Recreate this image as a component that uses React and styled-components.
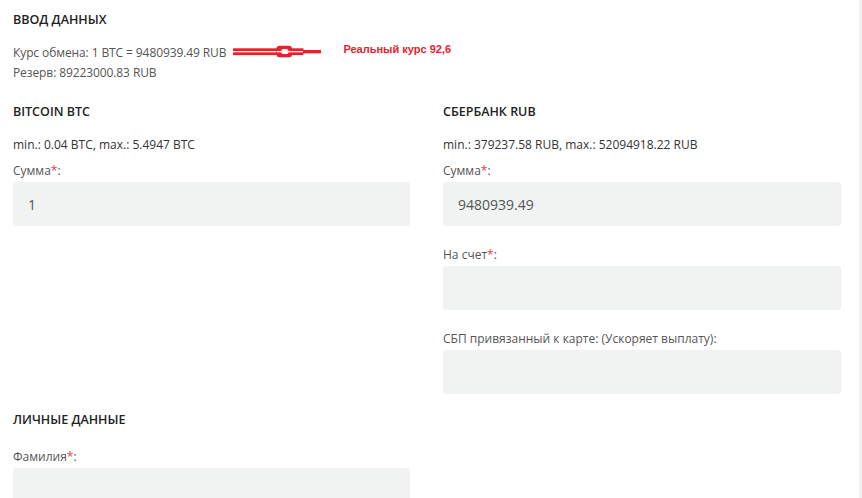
import React from 'react'
import styled, { createGlobalStyle } from 'styled-components'

const GlobalStyle = createGlobalStyle`
    html, body {
        margin: 0;
        padding: 0;
        background: #fff;
    }
    body {
        font-family: "Open Sans", "Noto Sans", sans-serif;
        font-size: 12px;
        color: #333;
    }
`

const Page = styled.div`
    display: flex;
    min-height: 498px;
    overflow: hidden;
`

const Main = styled.div`
    flex: 1;
    padding: 12px 18px 0 13px;
    display: flex;
    flex-direction: column;
`

const Track = styled.div`
    width: 3px;
    background: #f3f1f2;
`

const Heading = styled.div`
    font-size: 12.5px;
    line-height: 16px;
    font-weight: 600;
    color: #222;
    text-transform: uppercase;
    margin-top: ${({ $top }) => $top || 0}px;
`

const Info = styled.div`
    margin-top: 15px;
    display: flex;
    flex-direction: column;
`

const InfoRow = styled.div`
    display: flex;
    align-items: flex-start;
    line-height: 20px;
    letter-spacing: -0.1px;
    color: #555;
`

const Arrow = styled.svg`
    margin: 2px 0 0 5px;
    flex-shrink: 0;
`

const Note = styled.span`
    margin-left: 20px;
    font-family: "Liberation Sans", Arial, sans-serif;
    font-size: 11px;
    line-height: 13px;
    font-weight: 700;
    letter-spacing: 0;
    color: #e8232b;
`

const Columns = styled.div`
    margin-top: 21px;
    display: grid;
    grid-template-columns: 397px 398px;
    column-gap: 33px;
    align-items: start;
`

const Column = styled.div`
    display: flex;
    flex-direction: column;
`

const Limits = styled.div`
    margin-top: 17px;
    line-height: 16px;
    color: #333;
`

const Field = styled.div`
    display: flex;
    flex-direction: column;
    gap: 3px;
    margin-top: ${({ $first }) => ($first ? 10 : 21)}px;
`

const Label = styled.div`
    line-height: 16px;
    color: #555;
`

const Star = styled.span`
    color: #ef3b3b;
`

const Input = styled.div`
    height: 44px;
    box-sizing: border-box;
    padding: 0 15px;
    background: #f0f3f2;
    border-radius: 3px;
    display: flex;
    align-items: center;
    font-size: 14px;
    color: #555;
`

const Personal = styled.div`
    width: 397px;
    display: flex;
    flex-direction: column;
`

const RedArrow = () => (
    <Arrow width="92" height="13" viewBox="0 0 92 13">
        <rect x="2" y="3.3" width="44" height="6.7" fill="#e62129" />
        <rect x="2" y="6" width="44" height="1.3" fill="#fff" />
        <rect x="45.5" y="0.7" width="15.5" height="11.6" rx="3" fill="#e62129" />
        <rect x="50.5" y="4" width="6.8" height="5" rx="1.5" fill="#fff" />
        <rect x="46" y="6" width="5" height="1.3" fill="#fff" />
        <rect x="57" y="6" width="4" height="1.3" fill="#fff" />
        <rect x="60.5" y="3.3" width="12" height="6.7" fill="#e62129" />
        <rect x="60.5" y="6" width="12" height="1.3" fill="#fff" />
        <rect x="72" y="5" width="18" height="3.3" fill="#e62129" />
    </Arrow>
)

const FormField = ({ label, required, value, first }) => (
    <Field $first={first}>
        <Label>
            {label}
            {required && <Star>*</Star>}:
        </Label>
        <Input>{value}</Input>
    </Field>
)

const App = () => {
    return (
        <Page>
            <GlobalStyle />
            <Main>
                <Heading>Ввод данных</Heading>
                <Info>
                    <InfoRow>
                        Курс обмена: 1 BTC = 9480939.49 RUB
                        <RedArrow />
                        <Note>Реальный курс 92,6</Note>
                    </InfoRow>
                    <InfoRow>Резерв: 89223000.83 RUB</InfoRow>
                </Info>
                <Columns>
                    <Column>
                        <Heading>Bitcoin BTC</Heading>
                        <Limits>min.: 0.04 BTC, max.: 5.4947 BTC</Limits>
                        <FormField first label="Сумма" required value="1" />
                    </Column>
                    <Column>
                        <Heading>Сбербанк RUB</Heading>
                        <Limits>min.: 379237.58 RUB, max.: 52094918.22 RUB</Limits>
                        <FormField first label="Сумма" required value="9480939.49" />
                        <FormField label="На счет" required />
                        <FormField label="СБП привязанный к карте: (Ускоряет выплату)" />
                    </Column>
                </Columns>
                <Personal>
                    <Heading $top={18}>Личные данные</Heading>
                    <FormField label="Фамилия" required />
                </Personal>
            </Main>
            <Track />
        </Page>
    )
}

export default App
